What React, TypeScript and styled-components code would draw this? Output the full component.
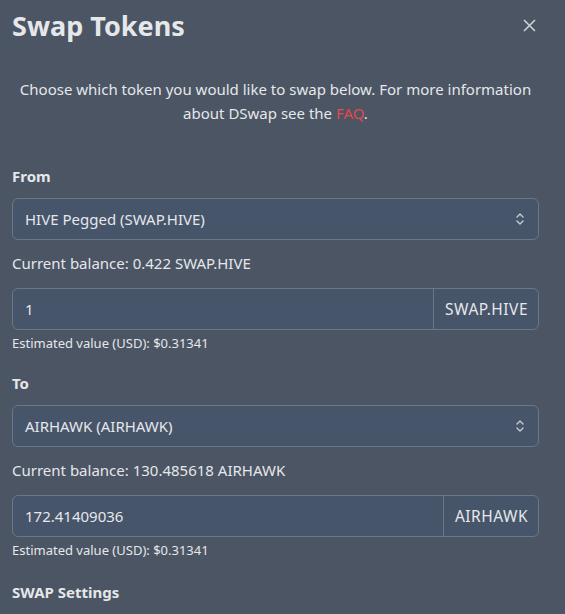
import styled, { createGlobalStyle } from "styled-components";

const GlobalStyle = createGlobalStyle`
  html, body {
    margin: 0;
    padding: 0;
    background-color: #4b5563;
  }
  body {
    font-family: "Noto Sans", "Open Sans", sans-serif;
    color: #e5e7eb;
  }
  * {
    box-sizing: border-box;
  }
`;

const Modal = styled.div`
  width: 565px;
  height: 614px;
  overflow: hidden;
  background-color: #4b5563;
  padding: 0 26px 0 12px;
`;

const Header = styled.div`
  display: flex;
  align-items: center;
  justify-content: space-between;
  height: 50px;
`;

const Title = styled.h1`
  margin: 0;
  font-size: 27px;
  font-weight: 700;
  color: #e5e7eb;
`;

const CloseButton = styled.button`
  background: transparent;
  border: none;
  padding: 0;
  margin-right: 2px;
  width: 16px;
  height: 16px;
  display: flex;
  align-items: center;
  justify-content: center;
  cursor: pointer;
`;

const Intro = styled.p`
  margin: 27px 0 0;
  text-align: center;
  font-size: 15px;
  line-height: 24px;
  color: #e5e7eb;
`;

const FaqLink = styled.a`
  color: #e5484f;
  text-decoration: none;
`;

const Section = styled.div<{ $top: number }>`
  display: flex;
  flex-direction: column;
  margin-top: ${({ $top }) => $top}px;
`;

const Label = styled.div`
  font-size: 15px;
  font-weight: 700;
  line-height: 20px;
  color: #e5e7eb;
  margin-bottom: 12px;
`;

const Select = styled.div`
  display: flex;
  align-items: center;
  justify-content: space-between;
  height: 42px;
  padding: 0 12px;
  background-color: #465569;
  border: 1px solid #6b7789;
  border-radius: 6px;
  font-size: 15px;
  color: #e5e7eb;
`;

const Balance = styled.div`
  margin-top: 13px;
  font-size: 15px;
  line-height: 20px;
  color: #e5e7eb;
`;

const InputGroup = styled.div`
  display: flex;
  height: 42px;
  margin-top: 15px;
  border: 1px solid #6b7789;
  border-radius: 6px;
  background-color: #465569;
  overflow: hidden;
`;

const AmountInput = styled.input`
  flex: 1 1 auto;
  width: 0;
  background: transparent;
  border: none;
  outline: none;
  padding: 0 12px;
  font-family: inherit;
  font-size: 15px;
  color: #e5e7eb;
`;

const Addon = styled.div`
  display: flex;
  align-items: center;
  padding: 0 10px 0 11px;
  border-left: 1px solid #6b7789;
  font-size: 15.5px;
  letter-spacing: 0.5px;
  color: #e5e7eb;
`;

const Estimate = styled.div`
  margin-top: 4px;
  font-size: 13px;
  line-height: 18px;
  color: #e5e7eb;
`;

const SettingsTitle = styled(Label)`
  margin-top: 23px;
`;

const Chevrons = () => (
  <svg width="12" height="16" viewBox="0 0 12 16" fill="none">
    <path
      d="M3 6l3-3 3 3M3 10l3 3 3-3"
      stroke="#c7ccd4"
      strokeWidth="1.4"
      strokeLinecap="round"
      strokeLinejoin="round"
    />
  </svg>
);

const CloseIcon = () => (
  <svg width="13" height="13" viewBox="0 0 13 13">
    <path d="M1 1l11 11M12 1L1 12" stroke="#d1d5db" strokeWidth="1.5" />
  </svg>
);

type TokenProps = {
  label: string;
  token: string;
  balance: string;
  symbol: string;
  amount: string;
  top: number;
};

const TokenBlock = ({ label, token, balance, symbol, amount, top }: TokenProps) => (
  <Section $top={top}>
    <Label>{label}</Label>
    <Select>
      <span>{token}</span>
      <Chevrons />
    </Select>
    <Balance>
      Current balance: {balance} {symbol}
    </Balance>
    <InputGroup>
      <AmountInput defaultValue={amount} />
      <Addon>{symbol}</Addon>
    </InputGroup>
    <Estimate>Estimated value (USD): $0.31341</Estimate>
  </Section>
);

export default function App() {
  return (
    <>
      <GlobalStyle />
      <Modal>
        <Header>
          <Title>Swap Tokens</Title>
          <CloseButton aria-label="Close">
            <CloseIcon />
          </CloseButton>
        </Header>
        <Intro>
          Choose which token you would like to swap below. For more information
          about DSwap see the <FaqLink href="#">FAQ</FaqLink>.
        </Intro>
        <TokenBlock
          top={41}
          label="From"
          token="HIVE Pegged (SWAP.HIVE)"
          balance="0.422"
          symbol="SWAP.HIVE"
          amount="1"
        />
        <TokenBlock
          top={21}
          label="To"
          token="AIRHAWK (AIRHAWK)"
          balance="130.485618"
          symbol="AIRHAWK"
          amount="172.41409036"
        />
        <SettingsTitle>SWAP Settings</SettingsTitle>
      </Modal>
    </>
  );
}
